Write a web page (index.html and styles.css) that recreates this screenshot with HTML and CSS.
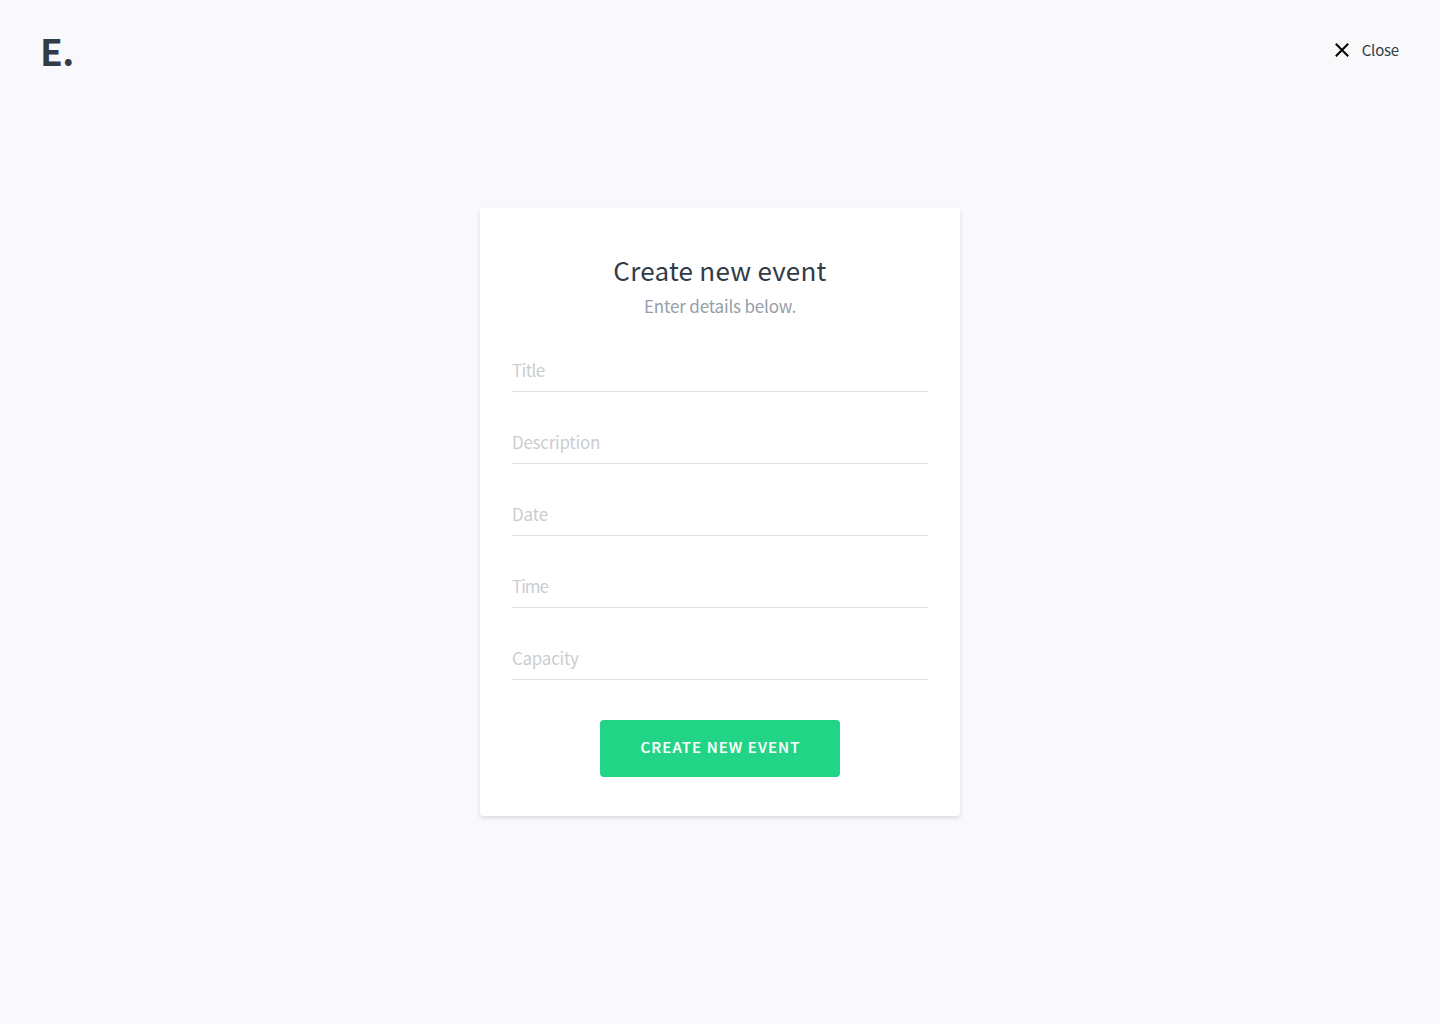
FILE: index.html
```html
<!DOCTYPE html>
<html lang="en">
<head>
<meta charset="utf-8">
<title>Create new event</title>
<link rel="stylesheet" href="styles.css">
</head>
<body>
<header class="header">
  <a class="logo">E.</a>
  <a class="close">
    <svg class="close-icon" width="14" height="14" viewBox="0 0 14 14"><path d="M.8.8l12.4 12.4M13.2.8L.8 13.2" fill="none" stroke="#000" stroke-width="2"/></svg>
    <span class="close-label">Close</span>
  </a>
</header>
<main class="main">
  <form class="card">
    <h1 class="title">Create new event</h1>
    <p class="subtitle">Enter details below.</p>
    <div class="field"><span class="label label-title">Title</span></div>
    <div class="field"><span class="label label-description">Description</span></div>
    <div class="field"><span class="label label-date">Date</span></div>
    <div class="field"><span class="label label-time">Time</span></div>
    <div class="field"><span class="label label-capacity">Capacity</span></div>
    <button class="submit" type="button">CREATE NEW EVENT</button>
  </form>
</main>
</body>
</html>
```
FILE: styles.css
```css
* { box-sizing: border-box; }
body {
  margin: 0;
  height: 1024px;
  display: flex;
  flex-direction: column;
  background: #f9f9fb;
  color: #323c46;
  font-family: "Noto Sans CJK JP", "Noto Sans", sans-serif;
}
.header {
  height: 208px;
  padding: 29px 41px 0 40px;
  display: flex;
  justify-content: space-between;
  align-items: flex-start;
}
.logo {
  font: 700 37px/42px "Noto Sans CJK JP", sans-serif;
  letter-spacing: -0.5px;
}
.close { display: flex; align-items: center; gap: 13px; height: 36px; margin-top: 3px; }
.close-icon { display: block; }
.close-label { padding-bottom: 1px; font-size: 15px; line-height: 24px; letter-spacing: -0.2px; }
.main { display: flex; justify-content: center; }
.card {
  width: 480px;
  height: 608px;
  padding: 38px 32px 0;
  display: flex;
  flex-direction: column;
  align-items: center;
  background: #fff;
  border-radius: 3px;
  box-shadow: 0 2px 4px rgba(0, 0, 0, 0.12);
}
.title { margin: 0; font-weight: 400; font-size: 26px; line-height: 48px; letter-spacing: 0.25px; white-space: nowrap; }
.subtitle { margin: 1px 0 19px; font-size: 17px; line-height: 22px; letter-spacing: -0.17px; color: #949ea8; white-space: nowrap; }
.field {
  width: 416px;
  height: 56px;
  flex: none;
  margin-bottom: 16px;
  display: flex;
  align-items: flex-end;
  border-bottom: 1px solid #dae1e7;
}
.label { padding-bottom: 9px; font-size: 17px; line-height: 24px; color: #cacdd0; }
.label-title { letter-spacing: -0.6px; }
.label-description { letter-spacing: -0.27px; }
.label-date { letter-spacing: -0.1px; }
.label-time { letter-spacing: -1px; }
.label-capacity { letter-spacing: -0.28px; }
.submit {
  width: 240px;
  height: 57px;
  margin-top: 24px;
  flex: none;
  border: 0;
  border-radius: 4px;
  padding: 0 0 3px 1px;
  background: #22d486;
  color: #fff;
  font: 500 15px/24px "Noto Sans CJK JP", sans-serif;
  letter-spacing: 1.1px;
  -webkit-text-stroke: 0.15px #fff;
}
```
